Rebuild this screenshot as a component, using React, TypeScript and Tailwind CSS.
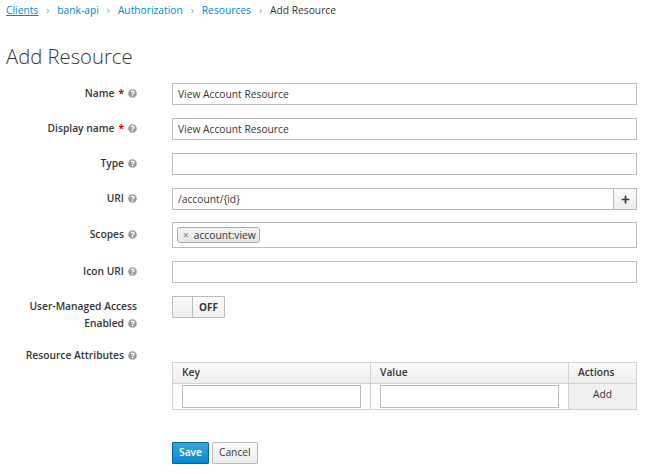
import { FaQuestionCircle, FaPlus } from 'react-icons/fa';

function Help() {
  return <FaQuestionCircle className="ml-[4px] inline-block h-[9px] w-[9px] align-[-1px] text-[#9c9c9c]" />;
}

function Req() {
  return <span className="ml-[4px] font-bold text-[#cc0000]">*</span>;
}

function Label({ children }: { children: React.ReactNode }) {
  return (
    <div className="flex items-center justify-end text-right text-[10.25px] font-semibold text-[#363636]">
      <span>{children}</span>
    </div>
  );
}

function TextInput({ value = '' }: { value?: string }) {
  return (
    <input
      readOnly
      value={value}
      className="h-[22px] w-full border border-[#bbbbbb] bg-white px-[5px] text-[10.25px] text-[#363636] outline-none"
    />
  );
}

export default function App() {
  const crumbs = ['Clients', 'bank-api', 'Authorization', 'Resources'];

  return (
    <div className="min-h-screen bg-white pl-[6px] pr-[16px] text-[#363636]" style={{ fontFamily: '"Open Sans", "Liberation Sans", sans-serif' }}>
      <ol className="flex h-[22px] items-center text-[10.25px]">
        {crumbs.map((c, i) => (
          <li key={c} className="flex items-center">
            <a className={i === 0 ? 'text-[#0088ce] underline' : 'text-[#0088ce]'}>{c}</a>
            <span className="mx-[8px] text-[#9c9c9c]">›</span>
          </li>
        ))}
        <li>Add Resource</li>
      </ol>

      <h1 className="mt-[21px] text-[20.25px] leading-[26px] font-light text-[#363636]">Add Resource</h1>

      <div className="mt-[14px] grid grid-cols-[131px_1fr] gap-x-[35px]">
        <Label>Name<Req /><Help /></Label>
        <TextInput value="View Account Resource" />
      </div>
      <div className="mt-[13px] grid grid-cols-[131px_1fr] gap-x-[35px]">
        <Label>Display name<Req /><Help /></Label>
        <TextInput value="View Account Resource" />
      </div>
      <div className="mt-[13px] grid grid-cols-[131px_1fr] gap-x-[35px]">
        <Label>Type<Help /></Label>
        <TextInput />
      </div>
      <div className="mt-[13px] grid grid-cols-[131px_1fr] gap-x-[35px]">
        <Label>URI<Help /></Label>
        <div className="flex">
          <input
            readOnly
            value="/account/{id}"
            className="h-[22px] min-w-0 flex-1 border border-[#bbbbbb] bg-white px-[5px] text-[10.25px] text-[#363636] outline-none"
          />
          <button className="flex h-[22px] w-[23px] items-center justify-center border border-l-0 border-[#bbbbbb] bg-gradient-to-b from-[#fafafa] to-[#ededed]">
            <FaPlus className="h-[9px] w-[9px] text-[#363636]" />
          </button>
        </div>
      </div>
      <div className="mt-[12px] grid grid-cols-[131px_1fr] gap-x-[35px]">
        <Label>Scopes<Help /></Label>
        <div className="flex h-[26px] items-center border border-[#bbbbbb] bg-white px-[4px]">
          <span className="flex h-[16px] items-center rounded-[3px] border border-[#aaaaaa] bg-gradient-to-b from-[#f4f4f4] to-[#e6e6e6] pr-[3px] pl-[5px] text-[10.25px] leading-none text-[#363636]">
            <span className="mr-[5px] text-[10px] font-bold text-[#999999]">×</span>
            account:view
          </span>
        </div>
      </div>
      <div className="mt-[13px] grid grid-cols-[131px_1fr] gap-x-[35px]">
        <Label>Icon URI<Help /></Label>
        <TextInput />
      </div>
      <div className="mt-[13px] grid grid-cols-[131px_1fr] gap-x-[35px]">
        <div className="pt-[2px] text-right text-[10.25px] leading-[17px] font-semibold text-[#363636]">
          User-Managed Access
          <br />
          Enabled<Help />
        </div>
        <div>
          <div className="flex h-[22px] w-[53px] overflow-hidden rounded-[1px] border border-[#bbbbbb]">
            <span className="w-[20px] border-r border-[#bbbbbb] bg-gradient-to-b from-[#fafafa] to-[#ededed]" />
            <span className="flex flex-1 items-center justify-center bg-gradient-to-b from-[#fafafa] to-[#f0f0f0] text-[10px] font-bold text-[#363636]">OFF</span>
          </div>
        </div>
      </div>
      <div className="mt-[15px] grid grid-cols-[131px_1fr] gap-x-[35px]">
        <div className="text-right text-[10.25px] leading-[17px] font-semibold text-[#363636]">
          Resource Attributes<Help />
        </div>
        <div className="pt-[15px]">
          <table className="w-full border-collapse border border-[#d1d1d1] text-[10.25px]">
            <thead>
              <tr className="h-[21px] bg-gradient-to-b from-[#fafafa] to-[#ededed]">
                <th className="w-[198px] border border-[#d1d1d1] px-[9px] text-left font-semibold">Key</th>
                <th className="w-[198px] border border-[#d1d1d1] px-[9px] text-left font-semibold">Value</th>
                <th className="border border-[#d1d1d1] px-[9px] text-left font-semibold">Actions</th>
              </tr>
            </thead>
            <tbody>
              <tr className="h-[26px]">
                <td className="border border-[#d1d1d1] px-[9px] py-[1px]">
                  <input readOnly className="block h-[23px] w-full border border-[#bbbbbb] outline-none" />
                </td>
                <td className="border border-[#d1d1d1] px-[9px] py-[1px]">
                  <input readOnly className="block h-[23px] w-full border border-[#bbbbbb] outline-none" />
                </td>
                <td className="border border-[#d1d1d1] bg-[#f1f1f1] pb-[4px] text-center">Add</td>
              </tr>
            </tbody>
          </table>
        </div>
      </div>

      <div className="mt-[32px] grid grid-cols-[131px_1fr] gap-x-[35px]">
        <div />
        <div className="flex gap-[3px]">
          <button className="h-[22px] rounded-[1px] border border-[#00659c] bg-gradient-to-b from-[#39a5dc] to-[#0088ce] px-[6px] text-[10.25px] font-semibold text-white">
            Save
          </button>
          <button className="h-[22px] rounded-[1px] border border-[#bbbbbb] bg-gradient-to-b from-[#fafafa] to-[#ededed] px-[6px] text-[10.25px] text-[#363636]">
            Cancel
          </button>
        </div>
      </div>
    </div>
  );
}
